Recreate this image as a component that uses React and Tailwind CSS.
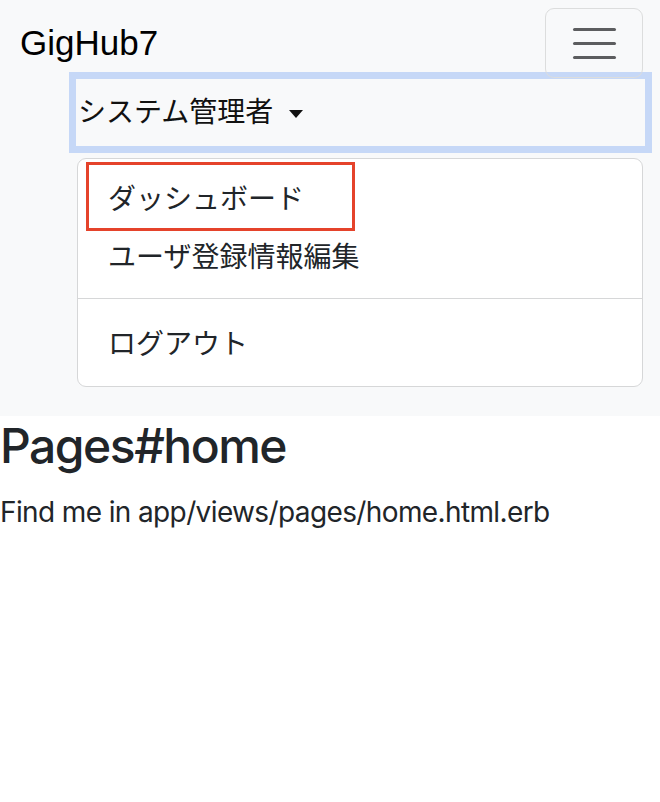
export default function App() {
  const font = { fontFamily: '"Liberation Sans", "Noto Sans CJK JP", Arial, sans-serif' };
  const font2 = { fontFamily: 'Inter, "Liberation Sans", Arial, sans-serif' };
  return (
    <div className="w-[660px] min-h-[802px] bg-white text-[#212529]" style={font}>
      <nav className="bg-[#f8f9fa] pt-[8px] pb-[29px]">
        <div className="flex items-center justify-between pl-[20px] pr-[17px]">
          <span className="text-[35px] leading-[1.2] text-black">GigHub7</span>
          <button className="relative z-10 w-[98px] h-[70px] border border-[#dcdddd] rounded-[9px] flex flex-col items-center justify-center gap-[11px]">
            <span className="block w-[43px] h-[3px] rounded-full bg-[#5c5d5f]" />
            <span className="block w-[43px] h-[3px] rounded-full bg-[#5c5d5f]" />
            <span className="block w-[43px] h-[3px] rounded-full bg-[#5c5d5f]" />
          </button>
        </div>
        <div className="mt-[1px] ml-[76px] w-[569px] h-[67px] shadow-[0_0_0_7px_#c6d8f7] flex items-center pl-[2px] text-[28px] text-[#111]">
          <span>システム管理者</span>
          <span className="ml-[16px] mt-[2px] w-0 h-0 border-t-[8px] border-t-[#111] border-x-[7px] border-x-transparent" />
        </div>
        <div className="relative mt-[12px] ml-[77px] w-[566px] bg-white border border-[#d6d7d8] rounded-[9px] pt-[7px] pb-[15px] text-[28px] text-[#212529]">
          <div className="h-[60px] flex items-center pl-[30px] pt-[7px]">ダッシュボード</div>
          <div className="h-[60px] flex items-center pl-[30px] pt-[3px]">ユーザ登録情報編集</div>
          <div className="my-[12px] h-px bg-[#d6d7d8]" />
          <div className="h-[60px] flex items-center pl-[30px] pt-[7px]">ログアウト</div>
          <div className="absolute left-[8px] top-[3px] w-[269px] h-[69px] border-[3px] border-[#e5432b]" />
        </div>
      </nav>
      <div style={font2}>
        <h1 className="mt-[1px] mb-[16px] text-[48px] leading-[1.2] font-medium tracking-[-1.5px] text-[#212529]">Pages#home</h1>
        <p className="text-[28px] leading-[42px] tracking-[-0.62px] text-[#212529]">Find me in app/views/pages/home.html.erb</p>
      </div>
    </div>
  );
}
